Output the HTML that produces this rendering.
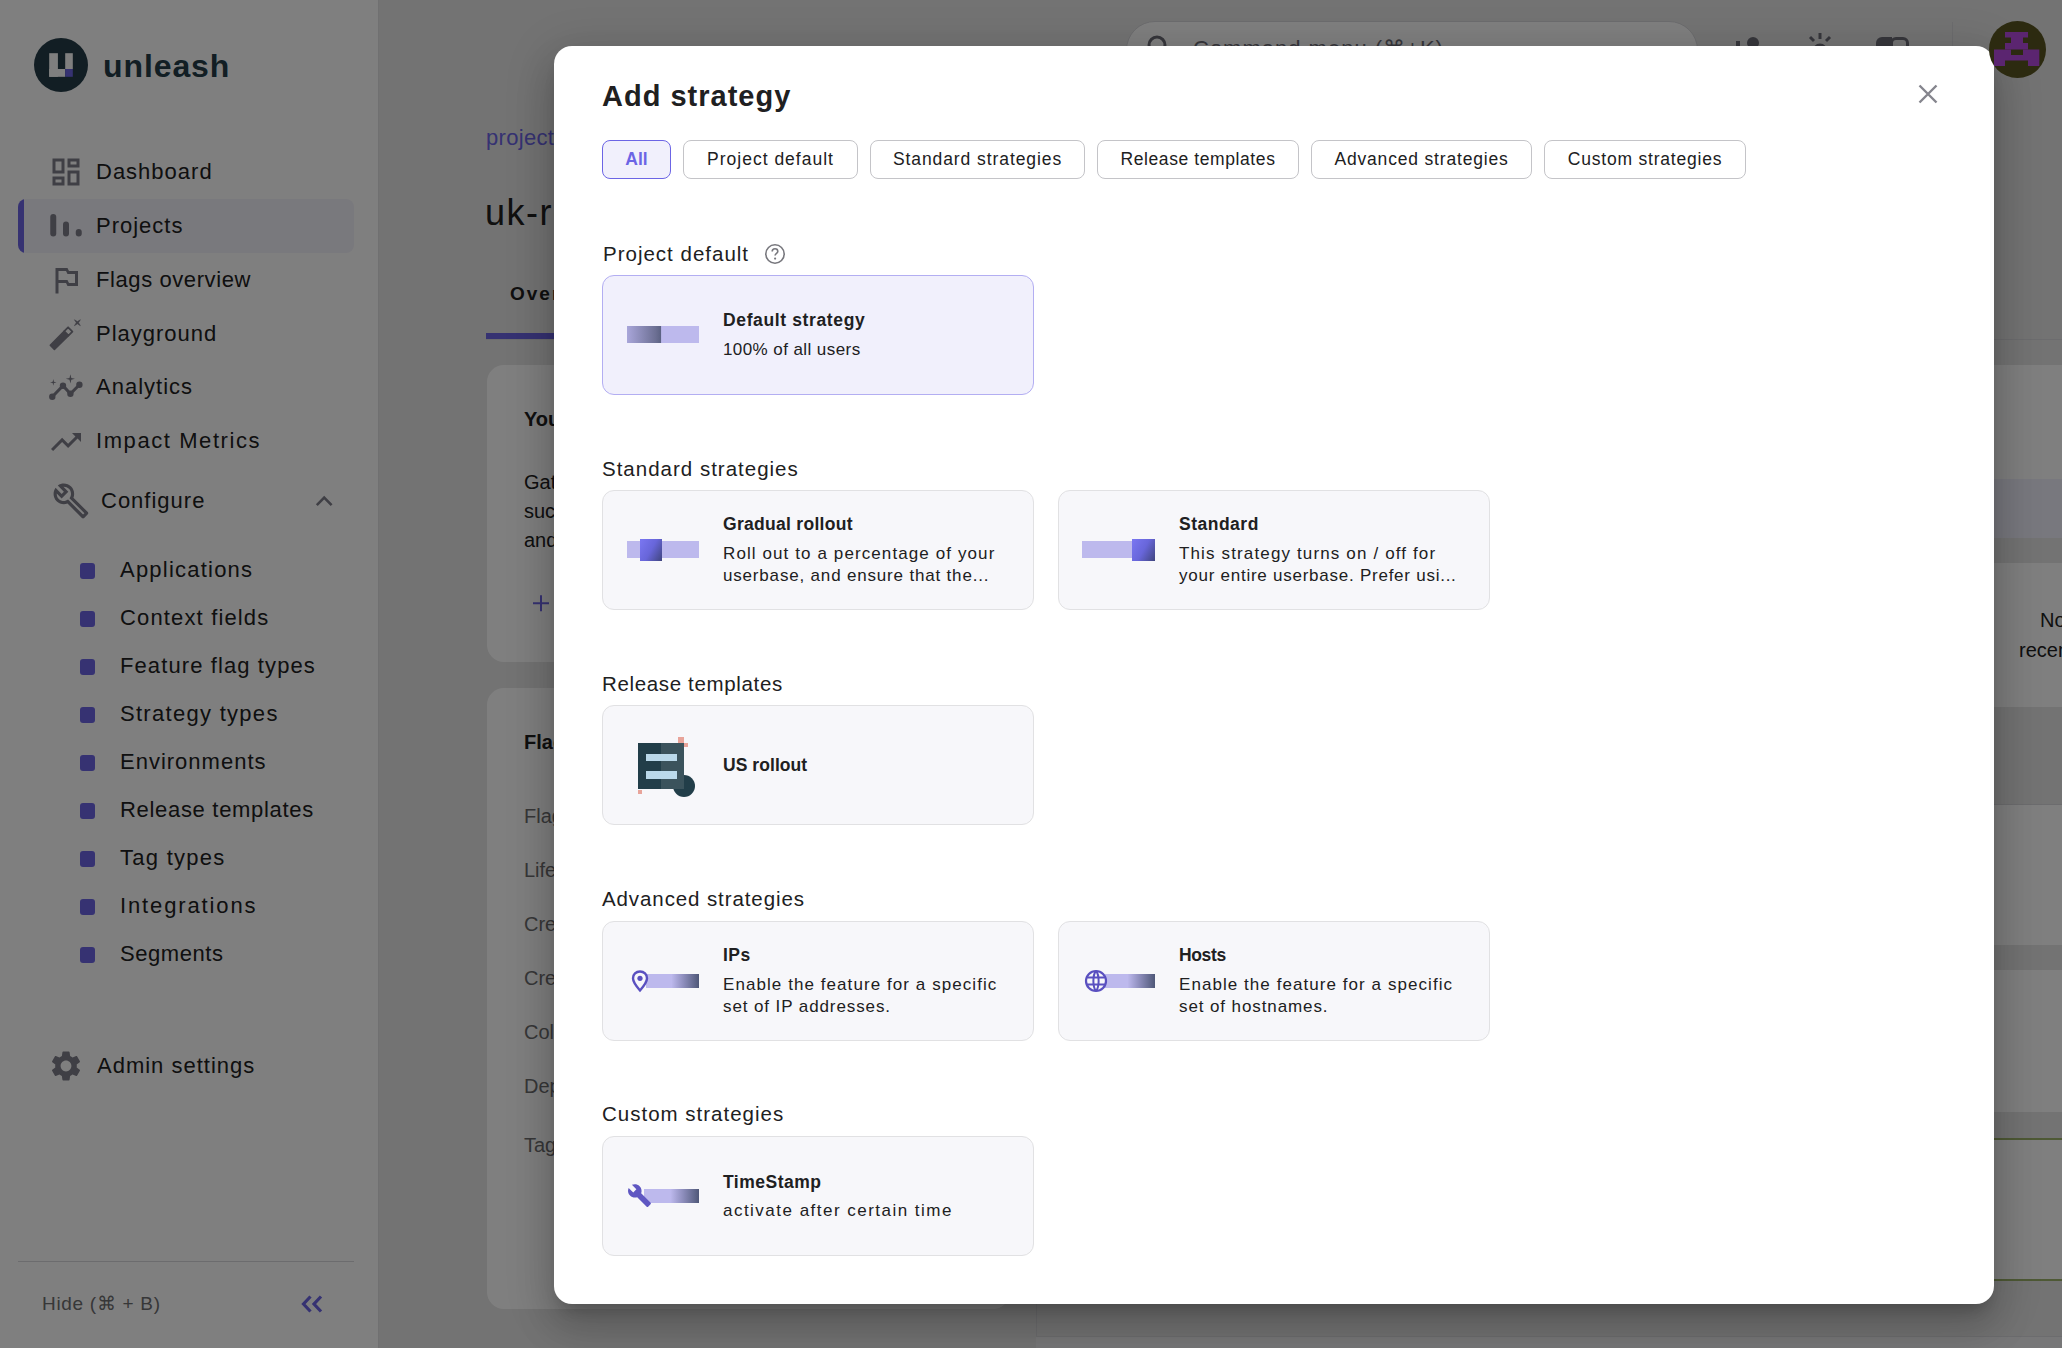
<!DOCTYPE html>
<html><head><meta charset="utf-8">
<style>
*{box-sizing:border-box;margin:0;padding:0}
html,body{width:2062px;height:1348px;overflow:hidden}
body{position:relative;background:#E7E7E7;font-family:"Liberation Sans",sans-serif;color:#202021}
.a{position:absolute;white-space:nowrap}
.t{position:absolute;white-space:nowrap;line-height:1}
/* sidebar */
#side{position:absolute;left:0;top:0;width:379px;height:1348px;background:#fff;border-right:1px solid #E1E1E3}
.nav{font-size:22px;letter-spacing:1px;color:#202021}
.ico{position:absolute;fill:#7F7E8A}
.sq{position:absolute;left:79.5px;width:15.2px;height:15.2px;border-radius:3px;background:#6C65E5}
/* overlay */
#ov{position:absolute;left:0;top:0;width:2062px;height:1348px;background:rgba(0,0,0,0.5)}
#modal{position:absolute;left:554px;top:46px;width:1440px;height:1258px;background:#fff;border-radius:18px;
 box-shadow:0px 11px 15px -7px rgba(0,0,0,0.2),0px 24px 38px 3px rgba(0,0,0,0.14),0px 9px 46px 8px rgba(0,0,0,0.12)}
.chip{position:absolute;top:140px;height:39px;border:1px solid #C4C4C8;border-radius:8px;background:#fff;
 font-size:17.5px;letter-spacing:1px;line-height:37px;text-align:center;color:#202021}
.lbl{font-size:20.5px;letter-spacing:1px;color:#202021}
.card{position:absolute;width:432px;height:120px;border:1px solid #E1E1E3;border-radius:12px;background:#F7F7FA}
.ct{font-size:17.5px;font-weight:700;letter-spacing:0.5px;color:#202021}
.cd{font-size:17px;letter-spacing:0.9px;color:#202021}
</style></head>
<body>
<!-- ===== background main ===== -->
<div class="a" style="left:1126px;top:21px;width:572px;height:58px;border:1px solid #D8D8DC;border-radius:29px;background:#fff"></div>
<div class="t" style="left:1193px;top:38px;font-size:22px;color:#6E6E78;letter-spacing:1px">Command menu (⌘+K)</div>
<svg class="a" style="left:1146px;top:34px" width="26" height="26" viewBox="0 0 26 26"><circle cx="11" cy="11" r="8" fill="none" stroke="#6E6E78" stroke-width="3"/></svg>
<div class="a" style="left:1736px;top:41px;width:4px;height:20px;background:#6E6E78"></div>
<div class="a" style="left:1747px;top:37px;width:12px;height:12px;border-radius:6px;background:#6E6E78"></div>
<svg class="a" style="left:1806px;top:31px" width="28" height="28" viewBox="0 0 28 28"><g stroke="#6E6E78" stroke-width="3"><line x1="14" y1="2" x2="14" y2="8"/><line x1="4" y1="6" x2="8" y2="10"/><line x1="24" y1="6" x2="20" y2="10"/></g><circle cx="14" cy="20" r="6" fill="none" stroke="#6E6E78" stroke-width="3"/></svg>
<div class="a" style="left:1876px;top:37px;width:16px;height:20px;border-radius:6px 0 0 0;background:#6E6E78"></div>
<div class="a" style="left:1890px;top:37px;width:19px;height:20px;border:3px solid #6E6E78;border-radius:6px 6px 0 0"></div>
<div class="a" style="left:1952px;top:22px;width:1px;height:56px;background:#D8D8DC"></div>

<div class="t" style="left:486px;top:127px;font-size:22px;color:#6C65E5;letter-spacing:0.3px">projects</div>
<div class="t" style="left:485px;top:195.2px;font-size:36px;color:#202021;letter-spacing:1.5px">uk-rollout</div>
<div class="t" style="left:510px;top:284px;font-size:19px;font-weight:700;color:#202021;letter-spacing:2px">Overview</div>
<div class="a" style="left:486px;top:333px;width:170px;height:6px;background:#6C65E5"></div>
<div class="a" style="left:486px;top:339px;width:1576px;height:1px;background:#D8D8DC"></div>

<div class="a" style="left:487px;top:365px;width:523px;height:297px;border-radius:17px;background:#fff"></div>
<div class="t" style="left:524px;top:409px;font-size:20px;font-weight:700">Your ...</div>
<div class="t" style="left:524px;top:472px;font-size:20px">Gather ...</div>
<div class="t" style="left:524px;top:501px;font-size:20px">such ...</div>
<div class="t" style="left:524px;top:530px;font-size:20px">and ...</div>
<svg class="a" style="left:0;top:0" width="560" height="620" viewBox="0 0 560 620"><path d="M533 603.2H549M541 595.2V611.2" stroke="#6C65E5" stroke-width="2"/></svg>

<div class="a" style="left:487px;top:688px;width:523px;height:621px;border-radius:17px;background:#fff"></div>
<div class="t" style="left:524px;top:732px;font-size:20px;font-weight:700">Flags</div>
<div class="t" style="left:524px;top:806px;font-size:20px;color:#6E6E70">Flags</div>
<div class="t" style="left:524px;top:860px;font-size:20px;color:#6E6E70">Lifecycle</div>
<div class="t" style="left:524px;top:914px;font-size:20px;color:#6E6E70">Created</div>
<div class="t" style="left:524px;top:968px;font-size:20px;color:#6E6E70">Created</div>
<div class="t" style="left:524px;top:1022px;font-size:20px;color:#6E6E70">Color</div>
<div class="t" style="left:524px;top:1076px;font-size:20px;color:#6E6E70">Dep</div>
<div class="t" style="left:524px;top:1135px;font-size:20px;color:#6E6E70">Tags</div>

<!-- right column -->
<div class="a" style="left:1036px;top:365px;width:1100px;height:173px;border-radius:17px;background:#fff"></div>
<div class="a" style="left:1036px;top:479px;width:1100px;height:59px;background:#F1F0FC"></div>
<div class="a" style="left:1036px;top:563px;width:1100px;height:144px;border-radius:17px;background:#fff"></div>
<div class="t" style="left:2040px;top:610px;font-size:20px">No</div>
<div class="t" style="left:2019px;top:640px;font-size:20px">recent</div>
<div class="a" style="left:1036px;top:804px;width:1100px;height:141px;background:#fff;border-top:1px solid #D8D8DC"></div>
<div class="a" style="left:1036px;top:970px;width:1100px;height:142px;background:#fff"></div>
<div class="a" style="left:1036px;top:1138px;width:1100px;height:143px;background:#fff;border-top:2px solid #9DB36A;border-bottom:2px solid #9DB36A"></div>
<div class="a" style="left:1036px;top:1304px;width:1px;height:44px;background:#D8D8DC"></div>
<div class="a" style="left:1036px;top:1336px;width:1100px;height:12px;background:#EEEEF0;border-top:1px solid #D8D8DC"></div>

<!-- ===== sidebar ===== -->
<div id="side"></div>
<svg class="a" style="left:34px;top:38px" width="54" height="54" viewBox="0 0 54 54">
 <circle cx="27" cy="27" r="27" fill="#243C48"/>
 <rect x="15.2" y="15.2" width="8.7" height="23.6" fill="#fff"/><rect x="15.2" y="31" width="16" height="7.8" fill="#fff"/><rect x="31.2" y="15.2" width="7.6" height="15.8" fill="#fff"/>
 <rect x="31.2" y="31" width="7.6" height="7.8" fill="#6C65E5"/>
</svg>
<div class="t" style="left:103px;top:50px;font-size:32px;font-weight:700;letter-spacing:0.9px;color:#243C48">unleash</div>

<!-- selected row -->
<div class="a" style="left:18px;top:199px;width:336px;height:54px;border-radius:8px;background:#F3F2FA;overflow:hidden"><div style="width:6px;height:54px;background:#6C65E5"></div></div>

<!-- icons -->
<svg class="ico" style="left:48px;top:154px" width="36" height="36" viewBox="0 0 24 24"><path d="M19 5v2h-4V5h4M9 5v6H5V5h4m10 8v6h-4v-6h4M9 17v2H5v-2h4M21 3h-8v6h8V3zM11 3H3v10h8V3zm10 8h-8v10h8V11zm-10 4H3v6h8v-6z"/></svg>
<svg class="ico" style="left:48px;top:208px" width="36" height="36" viewBox="0 0 24 24"><rect x="1.5" y="4" width="4" height="15" rx="2"/><rect x="10" y="9" width="4" height="10" rx="2"/><rect x="18.5" y="14" width="4" height="5" rx="2"/></svg>
<svg class="ico" style="left:48px;top:262px" width="36" height="36" viewBox="0 0 24 24"><path d="M14 6l-1-2H5v17h2v-7h5l1 2h7V6h-6zm4 8h-4l-1-2H7V6h5l1 2h5v6z"/></svg>
<svg class="a" style="left:0;top:0" width="100" height="420" viewBox="0 0 100 420"><g fill="#7F7E8A" stroke="#7F7E8A" stroke-linejoin="round"><path d="M50.3 345.3 L54.4 349.4 L68.4 335.6 L64.1 331.3 Z" stroke-width="1.6"/><path d="M64.1 331.3 L68.1 327.3 L72.4 331.6 L68.4 335.6 Z" fill="none" stroke-width="1.8"/><path d="M80.37 325.67 L77.40 323.80 L74.43 325.67 L76.30 322.70 L74.43 319.73 L77.40 321.60 L80.37 319.73 L78.50 322.70Z" stroke-width="0.6"/></g></svg>
<svg class="a" style="left:0;top:0" width="100" height="420" viewBox="0 0 100 420"><g fill="#7F7E8A"><path d="M52.3 396.8 L63 385.8 L70.4 393.8 L79.4 384.8" fill="none" stroke="#7F7E8A" stroke-width="3"/><circle cx="52.3" cy="396.8" r="3.2"/><circle cx="63" cy="385.8" r="3.2"/><circle cx="70.4" cy="393.8" r="3.2"/><circle cx="79.4" cy="384.8" r="3.2"/><path d="M75.00 378.80 L71.32 379.72 L70.40 383.40 L69.48 379.72 L65.80 378.80 L69.48 377.88 L70.40 374.20 L71.32 377.88Z"/><path d="M56.60 382.40 L53.94 383.04 L53.30 385.70 L52.66 383.04 L50.00 382.40 L52.66 381.76 L53.30 379.10 L53.94 381.76Z"/></g></svg>
<svg class="ico" style="left:48px;top:424px" width="36" height="36" viewBox="0 0 24 24"><path d="M16 6l2.29 2.29-4.88 4.88-4-4L2 16.59 3.41 18l6-6 4 4 6.3-6.29L22 12V6z"/></svg>
<svg class="ico" style="left:52px;top:482px" width="38" height="38" viewBox="0 0 24 24"><path d="M22.61 18.99l-9.08-9.08c.93-2.34.45-5.1-1.44-7C9.79.61 6.21.4 3.66 2.26L7.5 6.11 6.08 7.52 2.25 3.69C.39 6.23.6 9.82 2.9 12.11c1.86 1.86 4.57 2.35 6.89 1.48l9.11 9.11c.39.39 1.02.39 1.41 0l2.3-2.3c.4-.38.4-1.01 0-1.41zm-3 1.6l-9.46-9.46c-.61.45-1.29.72-2 .82-1.36.2-2.79-.21-3.83-1.25C3.37 9.76 2.93 8.5 3 7.26l3.09 3.09 4.24-4.24-3.09-3.09c1.24-.07 2.49.37 3.44 1.31 1.08 1.08 1.49 2.57 1.24 3.96-.12.71-.42 1.37-.88 1.96l9.45 9.45-.88.89z"/></svg>
<svg class="a" style="left:0;top:0" width="400" height="520" viewBox="0 0 400 520"><path d="M316.8 505.2 L324.2 497.6 L331.6 505.2" fill="none" stroke="#7F7E8A" stroke-width="2.6"/></svg>
<svg class="ico" style="left:48px;top:1048px" width="36" height="36" viewBox="0 0 24 24"><path d="M19.14 12.94c.04-.3.06-.61.06-.94 0-.32-.02-.64-.07-.94l2.03-1.58c.18-.14.23-.41.12-.61l-1.92-3.32c-.12-.22-.37-.29-.59-.22l-2.39.96c-.5-.38-1.03-.7-1.62-.94l-.36-2.54c-.04-.24-.24-.41-.48-.41h-3.84c-.24 0-.43.17-.47.41l-.36 2.54c-.59.24-1.13.57-1.62.94l-2.39-.96c-.22-.08-.47 0-.59.22L2.74 8.87c-.12.21-.08.47.12.61l2.03 1.58c-.05.3-.09.63-.09.94s.02.64.07.94l-2.03 1.58c-.18.14-.23.41-.12.61l1.92 3.32c.12.22.37.29.59.22l2.39-.96c.5.38 1.03.7 1.62.94l.36 2.54c.05.24.24.41.48.41h3.84c.24 0 .44-.17.47-.41l.36-2.54c.59-.24 1.13-.56 1.62-.94l2.39.96c.22.08.47 0 .59-.22l1.92-3.32c.12-.22.07-.47-.12-.61l-2.01-1.58zM12 15.6c-1.98 0-3.6-1.62-3.6-3.6s1.62-3.6 3.6-3.6 3.6 1.62 3.6 3.6-1.62 3.6-3.6 3.6z"/></svg>

<div class="t nav" style="left:96px;top:160.6px">Dashboard</div>
<div class="t nav" style="left:96px;top:214.7px">Projects</div>
<div class="t nav" style="left:96px;top:268.7px;letter-spacing:0.59px">Flags overview</div>
<div class="t nav" style="left:96px;top:322.5px">Playground</div>
<div class="t nav" style="left:96px;top:376px">Analytics</div>
<div class="t nav" style="left:96px;top:430.2px;letter-spacing:1.58px">Impact Metrics</div>
<div class="t nav" style="left:101px;top:490.3px">Configure</div>
<div class="sq" style="top:563.4px"></div><div class="t nav" style="left:120px;top:559.3px;letter-spacing:1.22px">Applications</div>
<div class="sq" style="top:611.4px"></div><div class="t nav" style="left:120px;top:607.4px;letter-spacing:1.15px">Context fields</div>
<div class="sq" style="top:659.4px"></div><div class="t nav" style="left:120px;top:654.9px;letter-spacing:1.1px">Feature flag types</div>
<div class="sq" style="top:707.4px"></div><div class="t nav" style="left:120px;top:703px;letter-spacing:1.29px">Strategy types</div>
<div class="sq" style="top:755.4px"></div><div class="t nav" style="left:120px;top:750.7px">Environments</div>
<div class="sq" style="top:803.4px"></div><div class="t nav" style="left:120px;top:799.2px;letter-spacing:0.69px">Release templates</div>
<div class="sq" style="top:851.4px"></div><div class="t nav" style="left:120px;top:847.1px;letter-spacing:1.27px">Tag types</div>
<div class="sq" style="top:899.4px"></div><div class="t nav" style="left:120px;top:894.9px;letter-spacing:1.87px">Integrations</div>
<div class="sq" style="top:947.4px"></div><div class="t nav" style="left:120px;top:942.8px;letter-spacing:0.57px">Segments</div>
<div class="t nav" style="left:97px;top:1055.1px">Admin settings</div>
<div class="a" style="left:18px;top:1261px;width:336px;height:1px;background:#D8D8DC"></div>
<div class="t" style="left:42px;top:1294px;font-size:19px;letter-spacing:0.7px;color:#6E6E70">Hide (⌘ + B)</div>
<svg class="a" style="left:298px;top:1292px" width="28" height="24" viewBox="0 0 28 24"><path d="M12.5 4.5 L5.5 12 L12.5 19.5 M23 4.5 L16 12 L23 19.5" fill="none" stroke="#6C65E5" stroke-width="3.2"/></svg>

<!-- ===== overlay ===== -->
<div id="ov"></div>

<!-- ===== modal ===== -->
<div id="modal"></div>
<div class="t" style="left:602px;top:81.5px;font-size:29px;font-weight:700;letter-spacing:1px;color:#202021">Add strategy</div>
<svg class="a" style="left:1916px;top:82px" width="24" height="24" viewBox="0 0 24 24"><path d="M3.5 3.5 L20.5 20.5 M20.5 3.5 L3.5 20.5" stroke="#85858D" stroke-width="2.4"/></svg>

<div class="chip" style="left:602px;width:69px;border-color:#6C65E5;background:#F1F0FC;color:#6C65E5;font-weight:700;letter-spacing:0">All</div>
<div class="chip" style="left:683px;width:175px">Project default</div>
<div class="chip" style="left:870px;width:215px;letter-spacing:0.92px">Standard strategies</div>
<div class="chip" style="left:1097px;width:202px;letter-spacing:0.59px">Release templates</div>
<div class="chip" style="left:1311px;width:221px;letter-spacing:0.82px">Advanced strategies</div>
<div class="chip" style="left:1544px;width:202px;letter-spacing:0.79px">Custom strategies</div>

<div class="t lbl" style="left:603px;top:244px;letter-spacing:1px">Project default</div>
<svg class="a" style="left:763px;top:242px" width="24" height="24" viewBox="0 0 24 24"><circle cx="12" cy="12" r="9.2" fill="none" stroke="#77777D" stroke-width="1.6"/><path d="M9.2 9.6c0-1.7 1.3-2.8 2.8-2.8s2.8 1.1 2.8 2.6c0 1.9-2.7 2-2.7 4.2" fill="none" stroke="#77777D" stroke-width="1.6"/><circle cx="12.1" cy="16.6" r="1.1" fill="#77777D"/></svg>

<!-- project default card -->
<div class="card" style="left:602px;top:275px;background:#F1F0FC;border-color:#B3AEF2"></div>
<div class="a" style="left:627px;top:326px;width:72px;height:17px;background:linear-gradient(90deg,#A9A6DA 0%,#6C6F93 40%,#5C6283 47%,#BDB9ED 48%,#BDB9ED 100%)"></div>
<div class="t ct" style="left:723px;top:312.2px;letter-spacing:0.63px">Default strategy</div>
<div class="t cd" style="left:723px;top:340.6px;letter-spacing:0.42px">100% of all users</div>

<div class="t lbl" style="left:602px;top:459px;letter-spacing:1px">Standard strategies</div>
<div class="card" style="left:602px;top:490px"></div>
<div class="a" style="left:627px;top:541px;width:72px;height:17px;background:#BDB9ED"></div>
<div class="a" style="left:640px;top:539px;width:22px;height:22px;background:linear-gradient(120deg,#7A77F2 0%,#6866DA 50%,#40457E 100%)"></div>
<div class="t ct" style="left:723px;top:516.2px;letter-spacing:0.29px">Gradual rollout</div>
<div class="t cd" style="left:723px;top:544.6px;letter-spacing:1.1px">Roll out to a percentage of your</div>
<div class="t cd" style="left:723px;top:566.6px;letter-spacing:0.82px">userbase, and ensure that the...</div>

<div class="card" style="left:1058px;top:490px"></div>
<div class="a" style="left:1082px;top:541px;width:72px;height:17px;background:#BDB9ED"></div>
<div class="a" style="left:1132px;top:539px;width:23px;height:22px;background:linear-gradient(120deg,#7A77F2 0%,#6866DA 50%,#40457E 100%)"></div>
<div class="t ct" style="left:1179px;top:516.2px">Standard</div>
<div class="t cd" style="left:1179px;top:544.6px;letter-spacing:1.14px">This strategy turns on / off for</div>
<div class="t cd" style="left:1179px;top:566.6px;letter-spacing:0.75px">your entire userbase. Prefer usi...</div>

<div class="t lbl" style="left:602px;top:674px;letter-spacing:0.65px">Release templates</div>
<div class="card" style="left:602px;top:705px"></div>
<svg class="a" style="left:634px;top:735px" width="64" height="64" viewBox="0 0 64 64">
 <circle cx="50" cy="51" r="11" fill="#223E49"/>
 <rect x="4" y="8" width="23" height="46" fill="#223E49"/><rect x="27" y="8" width="23" height="46" fill="#3B535C"/>
 <rect x="12" y="19" width="31" height="7" fill="#BAD9EA"/><rect x="12" y="36" width="31" height="8" fill="#BAD9EA"/>
 <rect x="44" y="2" width="6" height="6" fill="#E8A49A"/><rect x="50" y="8" width="4" height="4" fill="#E8A49A"/><rect x="4" y="55" width="4" height="4" fill="#E8A49A"/>
</svg>
<div class="t ct" style="left:723px;top:757.2px;letter-spacing:0.06px">US rollout</div>

<div class="t lbl" style="left:602px;top:889px;letter-spacing:0.9px">Advanced strategies</div>
<div class="card" style="left:602px;top:921px"></div>
<div class="a" style="left:646px;top:974px;width:53px;height:14px;background:linear-gradient(90deg,#BDB9ED 0%,#BDB9ED 48%,#8F8FBE 70%,#4F5878 100%)"></div>
<svg class="a" style="left:628px;top:968px" width="24" height="26" viewBox="0 0 24 26"><path d="M12 3.5c-4 0-7 3-7 6.8 0 4.3 7 12.2 7 12.2s7-7.9 7-12.2c0-3.8-3-6.8-7-6.8z" fill="#F7F7FA" stroke="#5A50C0" stroke-width="2.4"/><circle cx="12" cy="10.3" r="2.6" fill="#5A50C0"/></svg>
<div class="t ct" style="left:723px;top:947.2px">IPs</div>
<div class="t cd" style="left:723px;top:975.6px;letter-spacing:1.07px">Enable the feature for a specific</div>
<div class="t cd" style="left:723px;top:997.6px">set of IP addresses.</div>

<div class="card" style="left:1058px;top:921px"></div>
<div class="a" style="left:1105px;top:974px;width:50px;height:14px;background:linear-gradient(90deg,#BDB9ED 0%,#BDB9ED 45%,#8F8FBE 68%,#4F5878 100%)"></div>
<svg class="a" style="left:1083px;top:968px" width="26" height="26" viewBox="0 0 26 26"><circle cx="13" cy="13" r="10" fill="#F7F7FA" stroke="#5A50C0" stroke-width="2.2"/><path d="M3.5 9.5h19M3.5 16.5h19M13 3c-3.5 4-3.5 16 0 20M13 3c3.5 4 3.5 16 0 20" fill="none" stroke="#5A50C0" stroke-width="2"/></svg>
<div class="t ct" style="left:1179px;top:947.2px;letter-spacing:-0.37px">Hosts</div>
<div class="t cd" style="left:1179px;top:975.6px;letter-spacing:1.06px">Enable the feature for a specific</div>
<div class="t cd" style="left:1179px;top:997.6px">set of hostnames.</div>

<div class="t lbl" style="left:602px;top:1104px;letter-spacing:1px">Custom strategies</div>
<div class="card" style="left:602px;top:1136px"></div>
<div class="a" style="left:644px;top:1189px;width:55px;height:14px;background:linear-gradient(90deg,#BDB9ED 0%,#BDB9ED 48%,#8F8FBE 70%,#4F5878 100%)"></div>
<svg class="a" style="left:627px;top:1183px" width="25" height="25" viewBox="0 0 24 24"><path d="M22.7 19l-9.1-9.1c.9-2.3.4-5-1.5-6.9-2-2-5-2.4-7.4-1.3L9 6 6 9 1.6 4.7C.4 7.1.9 10.1 2.9 12.1c1.9 1.9 4.6 2.4 6.9 1.5l9.1 9.1c.4.4 1 .4 1.4 0l2.3-2.3c.5-.4.5-1.1.1-1.4z" fill="#5F57C2"/></svg>
<div class="t ct" style="left:723px;top:1173.8px">TimeStamp</div>
<div class="t cd" style="left:723px;top:1201.6px;letter-spacing:1.48px">activate after certain time</div>

<!-- avatar on top -->
<svg class="a" style="left:1989px;top:21px" width="57" height="57" viewBox="0 0 57 57">
 <circle cx="28.5" cy="28.5" r="28.5" fill="#2C2A10"/>
 <g fill="#5B2570" transform="translate(-1989,-21)">
  <rect x="2005" y="32" width="23" height="5.5"/>
  <rect x="2011" y="37" width="12" height="6.5"/>
  <rect x="2005" y="43" width="23" height="6.5"/>
  <path d="M1994 49.5h45.3v11h-45.3z M2011 49.5v5.5h12v-5.5z" fill-rule="evenodd"/>
  <rect x="1994" y="60" width="11" height="6"/>
  <rect x="2028" y="60" width="11.3" height="6"/>
 </g>
</svg>
</body></html>
